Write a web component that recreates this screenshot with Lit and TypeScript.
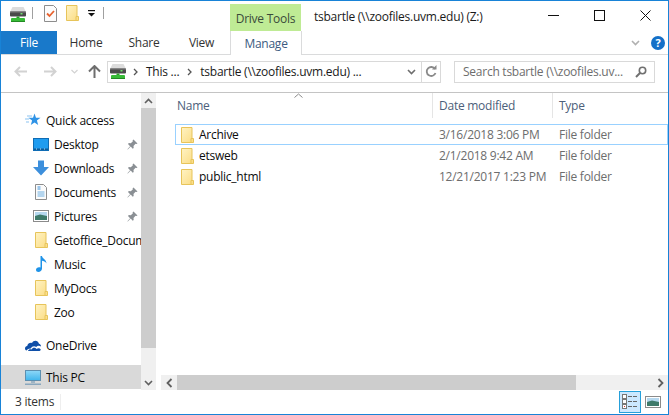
import { LitElement, html, css } from "lit";
import { customElement } from "lit/decorators.js";

const drive = () => html`<svg class="ico" width="16" height="15" viewBox="0 0 16 15"><path d="M2.500 0h11L16 5H0z" fill="#dcdcdc"/><rect x="0" y="4.500" width="16" height="5" rx="1" fill="#4a4a4a"/><rect x="0" y="4.500" width="16" height="1" fill="#7a7a7a"/><rect x="10.500" y="6" width="2" height="1.500" fill="#6fe06f"/><rect x="6.500" y="9.500" width="3" height="2" fill="#2c9a2c"/><rect x="1" y="11" width="14" height="4" rx="1" fill="#37bb37"/><rect x="1" y="14" width="14" height="1" fill="#238a23"/></svg>`;

const folder = () => html`<svg class="ico" width="13" height="16" viewBox="0 0 13 16"><defs><linearGradient id="fg" x1="0" y1="0" x2="1" y2="1"><stop offset="0" stop-color="#fff3c4"/><stop offset="1" stop-color="#fbdc83"/></linearGradient></defs><path d="M.5.5h10.5v11h1.500v4H.5z" fill="url(#fg)" stroke="#e7c45a"/><path d="M10 15V11.500h1" fill="none" stroke="#e7c45a"/></svg>`;

const pin = () => html`<svg class="pin" width="11" height="11" viewBox="0 0 11 11"><path d="M6.500.5l4 4-1 .6-1-.3-2 2.200.2 2-1 .8-2-2.200L.8 10.600l-.4-.4 2.700-3L1 5l.8-1 2 .2 2.100-2-.3-1z" fill="#8a8f94"/></svg>`;

const navIcons: Record<string, () => unknown> = {
  star: () => html`<svg class="ico" width="16" height="14" viewBox="0 0 16 14"><path d="M9.500.5l1.500 4.300h4.500l-3.600 2.700 1.300 4.600-3.700-2.700-3.700 2.700 1.300-4.600L3.400 4.800H8z" fill="#2f93e6"/><path d="M2 3h5M0 6h4M1 9h3" stroke="#8cc4f1" stroke-width="1.200"/></svg>`,
  desktop: () => html`<svg class="ico" width="16" height="13" viewBox="0 0 16 13"><rect x=".5" y=".5" width="15" height="12" fill="#1f9cf0" stroke="#0f6cb4"/><rect x="1" y="10.500" width="14" height="1.500" fill="#0b5b99"/><path d="M3 11h10" stroke="#bfe3fa" stroke-dasharray="1 3"/></svg>`,
  down: () => html`<svg class="ico" width="16" height="16" viewBox="0 0 16 16"><path d="M5 .5h6V7h5l-8 8.500L0 7h5z" fill="#3d8fdc"/></svg>`,
  docs: () => html`<svg class="ico" width="12" height="16" viewBox="0 0 12 16"><path d="M.5.5h8l3 3v12H.5z" fill="#fbfbfb" stroke="#8d8d8d"/><path d="M2.500 3h3M2.500 5h3" stroke="#3b8fd8"/><path d="M2.500 8h7M2.500 10h7M2.500 12h7" stroke="#6fb0e2"/></svg>`,
  pics: () => html`<svg class="ico" width="16" height="12" viewBox="0 0 16 12"><rect x=".5" y=".5" width="15" height="11" fill="#fff" stroke="#8b8b8b"/><rect x="2" y="2" width="12" height="4" fill="#b6d8ef"/><path d="M2 6l5-1.500 7 1.500v4H2z" fill="#3e7a6a"/></svg>`,
  folder,
  music: () => html`<svg class="ico" width="11" height="16" viewBox="0 0 11 16"><path d="M4.500 0h1.500c.3 2.500 4.500 3.500 4.500 7.500-1-1.800-3-2.500-4.500-2.700V12.500C6 14.800 4 16 2.500 16 1 16 0 15 0 13.700s1.500-2.500 3-2.500c.6 0 1.100.1 1.500.3z" fill="#1f93e8"/></svg>`,
  cloud: () => html`<svg class="ico" width="16" height="11" viewBox="0 0 16 11"><path d="M0 8.500C0 7 1 6 2.200 6 2.800 3.300 5.300 2.200 7 3 8.500 0 13 0 14 3.800c1.200.3 2 1.400 2 2.700-1.600-1.300-3.800-.9-4.800.5C9.600 5.600 6.700 6 6 8.500 4 8.300 2.500 9 1.500 10.500.6 10.200 0 9.500 0 8.500z" fill="#0f4fa8"/><path d="M3 11c.4-1.300 1.800-2 3.600-1.500.8-2.300 3.600-2.500 5-.5 1.300-1 3.200-.8 4.200.4-.3.900-1 1.600-2 1.600z" fill="#0f4fa8"/></svg>`,
  pc: () => html`<svg class="ico" width="16" height="15" viewBox="0 0 16 15"><defs><linearGradient id="pg" x1="0" y1="0" x2="0" y2="1"><stop offset="0" stop-color="#8ed8f8"/><stop offset="1" stop-color="#3fb4ec"/></linearGradient></defs><rect x=".5" y=".5" width="15" height="10" fill="url(#pg)" stroke="#5c8fb0"/><rect x="6" y="11" width="4" height="2" fill="#9fb4c4"/><rect y="13.500" width="16" height="1.500" fill="#8aa7bd"/></svg>`,
};

const chev = (d: string, c = "#606060") => html`<svg width="9" height="6" viewBox="0 0 9 6"><path d="${d === "up" ? "M1 5l3.500-3.500L8 5" : "M1 1l3.500 3.500L8 1"}" fill="none" stroke="${c}" stroke-width="1.600"/></svg>`;
const chevH = (d: string) => html`<svg width="7" height="10" viewBox="0 0 7 10"><path d="${d === "l" ? "M5.500 1L1.500 5l4 4" : "M1.500 1l4 4-4 4"}" fill="none" stroke="#606060" stroke-width="1.800"/></svg>`;
const crumb = () => html`<svg class="crumb" width="5" height="8" viewBox="0 0 5 8"><path d="M1 1l3 3-3 3" fill="none" stroke="#555" stroke-width="1.300"/></svg>`;

type Nav = { icon: string; label: string; pin?: boolean };
const quick: Nav[] = [
  { icon: "desktop", label: "Desktop", pin: true },
  { icon: "down", label: "Downloads", pin: true },
  { icon: "docs", label: "Documents", pin: true },
  { icon: "pics", label: "Pictures", pin: true },
  { icon: "folder", label: "Getoffice_Documents" },
  { icon: "music", label: "Music" },
  { icon: "folder", label: "MyDocs" },
  { icon: "folder", label: "Zoo" },
];
const files = [
  { n: "Archive", d: "3/16/2018 3:06 PM", sel: true },
  { n: "etsweb", d: "2/1/2018 9:42 AM" },
  { n: "public_html", d: "12/21/2017 1:23 PM" },
];

@customElement("app-root")
export class AppRoot extends LitElement {
  static styles = css`
    :host { display: block; width: 669px; height: 415px; }
    * { box-sizing: border-box; }
    .win { width: 669px; height: 415px; border: 1px solid #1883d7; background: #fff; display: flex; flex-direction: column; overflow: hidden;
      font: 12px/16px "Open Sans", "Noto Sans", sans-serif; letter-spacing: -0.25px; color: #000; }
    .ico { display: block; flex: none; }
    .title { height: 30px; flex: none; display: flex; align-items: flex-start; }
    .qat { display: flex; align-items: center; width: 229px; height: 30px; padding: 0 0 6px 9px; flex: none; }
    .qdrive { margin-top: 2px; }
    .qsep { width: 1px; height: 12px; background: #a0a0a0; flex: none; }
    .drivetools { width: 71px; height: 27px; margin-top: 3px; flex: none; background: #bfeb95; color: #3a4a3a; text-align: center; line-height: 29px; }
    .wintitle { margin-left: 13px; line-height: 31px; flex: 1; color: #1a1a1a; white-space: nowrap; }
    .ctrl { display: flex; width: 138px; height: 28px; flex: none; }
    .ctrl div { width: 46px; display: flex; align-items: center; justify-content: center; }
    .tabs { height: 23px; flex: none; display: flex; align-items: stretch; position: relative; }
    .tab { display: flex; align-items: center; justify-content: center; color: #333; padding-top: 1px; }
    .file { width: 56px; background: #1979ca; color: #fff; }
    .manage { width: 72px; border: 1px solid #dadbdc; border-width: 0 1px; color: #3b5a80; background: #fff; height: 24px; position: relative; z-index: 1; }
    .tabsright { margin-left: auto; display: flex; align-items: center; gap: 11px; padding-right: 3px; }
    .help { width: 14px; height: 14px; border-radius: 50%; background: #1470c8; color: #fff; font-size: 11px; font-weight: 700; line-height: 14px; text-align: center; letter-spacing: 0; }
    .addr { height: 39px; flex: none; border-top: 1px solid #dadbdc; border-bottom: 1px solid #c4c4c4; display: flex; align-items: center; padding: 0 13px 4px 0; }
    .navbtns { width: 106px; flex: none; display: flex; align-items: center; height: 21px; position: relative; }
    .path { width: 334px; height: 22px; flex: none; border: 1px solid #d9d9d9; display: flex; align-items: center; padding-left: 2px; color: #1a1a1a; }
    .crumb { flex: none; margin: 0 8px 0 7px; }
    .path .wide { margin-right: 1px; }
    .pathspace { flex: 1; }
    .pathend { width: 19px; height: 20px; border-left: 1px solid #d9d9d9; display: flex; align-items: center; justify-content: center; flex: none; margin-left: 5px; }
    .search { width: 201px; height: 22px; margin-left: 13px; flex: none; border: 1px solid #d9d9d9; display: flex; align-items: center; padding: 0 7px 0 8px; color: #6d6d6d; justify-content: space-between; white-space: nowrap; }
    .main { flex: 1; min-height: 0; display: flex; }
    .nav { width: 140px; flex: none; padding-top: 15px; display: flex; flex-direction: column; }
    .nrow { height: 24px; display: flex; align-items: center; flex: none; white-space: nowrap; overflow: hidden; color: #0c0c0c; }
    .nrow.top { padding-left: 24px; }
    .nrow.sub { padding-left: 32px; }
    .icw { width: 16px; margin-right: 5px; flex: none; display: flex; justify-content: center; }
    .nlabel { flex: 1; min-width: 0; overflow: hidden; padding-top: 1px; }
    .pin { flex: none; margin-right: 3px; }
    .nrow.sel { background: #d9d9d9; }
    .nrow.one { margin-top: 9px; }
    .nrow.pc { margin-top: 8px; }
    .vs { width: 15px; flex: none; background: #f0f0f0; display: flex; flex-direction: column; }
    .sbtn { height: 15px; flex: none; display: flex; align-items: center; justify-content: center; }
    .vthumb { height: 240px; flex: none; background: #cdcdcd; }
    .vspace { flex: 1; }
    .list { flex: 1; min-width: 0; margin-left: 5px; display: flex; flex-direction: column; position: relative; }
    .sortcaret { position: absolute; left: 133px; top: 0; line-height: 0; }
    .head { height: 25px; flex: none; display: grid; grid-template-columns: 271px 120px 1fr; color: #4c607a; }
    .head div { padding-left: 16px; line-height: 26px; }
    .head div + div { border-left: 1px solid #e5e5e5; padding-left: 6px; height: 25px; }
    .rows { flex: 1; padding: 6px 0 0 14px; }
    .row { height: 21px; display: grid; grid-template-columns: 258px 120px 1fr; align-items: center; border: 1px solid transparent; line-height: 18px; }
    .row.sel { border-color: #99d1ff; }
    .row .n { display: flex; align-items: center; gap: 5px; padding-left: 5px; color: #0c0c0c; }
    .row .n span, .row .d, .row .t { padding-top: 1px; }
    .row .d, .row .t { color: #6d6d6d; padding-left: 5px; }
    .hs { height: 15px; flex: none; background: #f0f0f0; display: flex; align-items: center; }
    .hb { width: 16px; height: 15px; flex: none; display: flex; align-items: center; justify-content: center; }
    .hthumb { width: 399px; height: 15px; background: #cdcdcd; flex: none; }
    .hspace { flex: 1; }
    .status { height: 24px; flex: none; display: flex; align-items: center; color: #333; padding-left: 14px; }
    .status .sep { width: 1px; height: 16px; background: #eee; margin-left: 6px; }
    .views { margin-left: auto; display: flex; align-items: center; padding-right: 7px; height: 100%; }
    .vbtn { width: 22px; height: 22px; background: #cce8ff; border: 1px solid #26a0da; display: flex; align-items: center; justify-content: center; }
    .vpic { margin-left: 4px; }
  `;

  private nrow(n: Nav, cls: string) {
    return html`<div class="nrow ${cls}"><span class="icw">${navIcons[n.icon]()}</span><span class="nlabel">${n.label}</span>${n.pin ? pin() : ""}</div>`;
  }

  render() {
    return html`<div class="win">
      <div class="title">
        <div class="qat">
          <span class="qdrive">${drive()}</span>
          <span class="qsep" style="margin:0 0 0 6px"></span>
          <svg class="ico" style="margin-left:11px" width="13" height="17" viewBox="0 0 13 17"><path d="M.5.500h9l3 3v13H.5z" fill="#fcfcfc" stroke="#8d8d8d"/><path d="M3 8.500l2.500 2.500L10 6" fill="none" stroke="#e8622e" stroke-width="1.800"/></svg>
          <span style="margin-left:9px">${folder()}</span>
          <svg class="ico" style="margin-left:9px" width="7" height="7" viewBox="0 0 7 7"><rect y="0" width="7" height="1.200" fill="#111"/><path d="M0 3h7L3.500 6.500z" fill="#111"/></svg>
          <span class="qsep" style="margin-left:8px"></span>
        </div>
        <div class="drivetools">Drive Tools</div>
        <div class="wintitle">tsbartle (\\\\zoofiles.uvm.edu) (Z:)</div>
        <div class="ctrl">
          <div><svg width="11" height="11" viewBox="0 0 11 11"><path d="M0 5.500h11" stroke="#111"/></svg></div>
          <div><svg width="11" height="11" viewBox="0 0 11 11"><rect x=".5" y=".5" width="10" height="10" fill="none" stroke="#111"/></svg></div>
          <div><svg width="11" height="11" viewBox="0 0 11 11"><path d="M.5.500l10 10M10.500.500l-10 10" stroke="#111"/></svg></div>
        </div>
      </div>
      <div class="tabs">
        <div class="tab file">File</div>
        <div class="tab" style="width:58px">Home</div>
        <div class="tab" style="width:58px">Share</div>
        <div class="tab" style="width:57px">View</div>
        <div class="tab manage">Manage</div>
        <div class="tabsright">${chev("down", "#b0b0b0")}<div class="help">?</div></div>
      </div>
      <div class="addr">
        <div class="navbtns">
          <svg class="ico" style="margin-left:13px" width="13" height="11" viewBox="0 0 13 11"><path d="M6 1L1.500 5.500 6 10M2 5.500h11" fill="none" stroke="#d2d2d2" stroke-width="2"/></svg>
          <svg class="ico" style="margin-left:17px" width="13" height="11" viewBox="0 0 13 11"><path d="M7 1l4.500 4.500L7 10M11 5.500H0" fill="none" stroke="#d2d2d2" stroke-width="2"/></svg>
          <svg class="ico" style="margin-left:14px" width="7" height="5" viewBox="0 0 7 5"><path d="M.5 1l3 3 3-3" fill="none" stroke="#d2d2d2" stroke-width="1.200"/></svg>
          <svg class="ico" style="margin-left:10px" width="13" height="13" viewBox="0 0 13 13"><path d="M1 6.500L6.500 1 12 6.500M6.500 1.500V13" fill="none" stroke="#6e6e6e" stroke-width="2"/></svg>
        </div>
        <div class="path">
          ${drive()}${crumb()}<span class="wide">This ...</span>${crumb()}<span>tsbartle (\\\\zoofiles.uvm.edu) ...</span>
          <span class="pathspace"></span>
          ${chev("down", "#6e6e6e")}
          <div class="pathend"><svg width="12" height="13" viewBox="0 0 12 13"><path d="M10 4A4.500 4.500 0 1 0 10.500 8" fill="none" stroke="#8a8a8a" stroke-width="1.800"/><path d="M7 4.500h4.500V0z" fill="#8a8a8a"/></svg></div>
        </div>
        <div class="search">
          <span>Search tsbartle (\\\\zoofiles.uv...</span>
          <svg width="12" height="12" viewBox="0 0 12 12"><circle cx="7.500" cy="4.500" r="3.200" fill="none" stroke="#707070" stroke-width="1.600"/><path d="M5 7l-4 4" stroke="#707070" stroke-width="2"/></svg>
        </div>
      </div>
      <div class="main">
        <div class="nav">
          ${this.nrow({ icon: "star", label: "Quick access" }, "top")}
          ${quick.map((q) => this.nrow(q, "sub"))}
          ${this.nrow({ icon: "cloud", label: "OneDrive" }, "top one")}
          ${this.nrow({ icon: "pc", label: "This PC" }, "top pc sel")}
        </div>
        <div class="vs">
          <div class="sbtn">${chev("up")}</div>
          <div class="vthumb"></div>
          <div class="vspace"></div>
          <div class="sbtn">${chev("down")}</div>
        </div>
        <div class="list">
          <div class="sortcaret"><svg width="9" height="5" viewBox="0 0 9 5"><path d="M.5 4.500l4-3.500 4 3.500" fill="none" stroke="#8a8a8a"/></svg></div>
          <div class="head"><div>Name</div><div>Date modified</div><div>Type</div></div>
          <div class="rows">
            ${files.map((f) => html`<div class="row ${f.sel ? "sel" : ""}"><div class="n">${folder()}<span>${f.n}</span></div><div class="d">${f.d}</div><div class="t">File folder</div></div>`)}
          </div>
          <div class="hs">
            <div class="hb">${chevH("l")}</div>
            <div class="hthumb"></div>
            <div class="hspace"></div>
            <div class="hb">${chevH("r")}</div>
          </div>
        </div>
      </div>
      <div class="status">
        <span>3 items</span><span class="sep"></span>
        <div class="views">
          <div class="vbtn"><svg width="16" height="16" viewBox="0 0 16 16"><rect x=".5" y=".5" width="4" height="4" fill="#fff" stroke="#777"/><rect x=".5" y="5.500" width="4" height="4" fill="#fff" stroke="#777"/><rect x=".5" y="10.500" width="4" height="4" fill="#fff" stroke="#777"/><rect x="2" y="12" width="1" height="1" fill="#d33"/><path d="M6 2.500h4M11 2.500h4M6 7.500h4M11 7.500h4M6 12.500h4M11 12.500h4" stroke="#666"/></svg></div>
          <div class="vpic">${navIcons.pics()}</div>
        </div>
      </div>
    </div>`;
  }
}
